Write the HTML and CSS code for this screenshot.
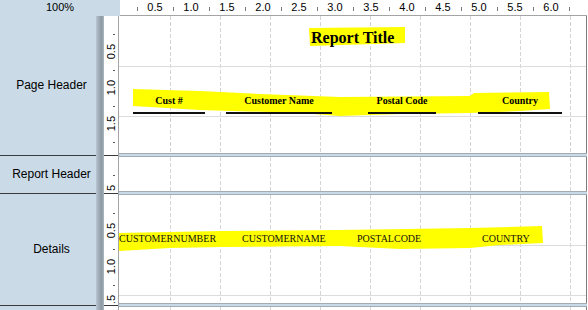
FILE: index.html
```html
<!DOCTYPE html>
<html>
<head>
<meta charset="utf-8">
<link rel="stylesheet" href="styles.css">
</head>
<body>
<div class="designer">
  <div class="topbar">
    <div class="zoom">100%</div>
    <div class="hruler">
      <span class="hcell">0.5</span><span class="hcell">1.0</span><span class="hcell">1.5</span><span class="hcell">2.0</span><span class="hcell">2.5</span><span class="hcell">3.0</span><span class="hcell">3.5</span><span class="hcell">4.0</span><span class="hcell">4.5</span><span class="hcell">5.0</span><span class="hcell">5.5</span><span class="hcell">6.0</span>
    </div>
  </div>

  <div class="section page">
    <div class="label">Page Header</div>
    <div class="strip"></div>
    <div class="vruler">
      <div class="vcell"><span>0.5</span></div><div class="vcell"><span>1.0</span></div><div class="vcell"><span>1.5</span></div>
    </div>
    <div class="canvas">
      <svg class="hl" width="467" height="137" viewBox="0 0 467 137">
        <polygon points="190,12 286,11 286,27 191,30" />
        <polygon points="14,73 81,75 141,78 221,81 351,80 355,77 430,76 431,93 401,95 351,97 281,98 221,100 181,97 81,94 14,90" />
      </svg>
      <div class="title">Report Title</div>
      <div class="hdr h-cust">Cust #</div>
      <div class="hdr h-name">Customer Name</div>
      <div class="hdr h-postal">Postal Code</div>
      <div class="hdr h-country">Country</div>
    </div>
  </div>
  <div class="sep"><div class="sep-label"></div><div class="strip"></div><div class="sep-ruler"></div><div class="band"></div></div>

  <div class="section report">
    <div class="label">Report Header</div>
    <div class="strip"></div>
    <div class="vruler">
      <div class="vcell"><span>0.5</span></div>
    </div>
    <div class="canvas"></div>
  </div>
  <div class="sep"><div class="sep-label"></div><div class="strip"></div><div class="sep-ruler"></div><div class="band"></div></div>

  <div class="section details">
    <div class="label">Details</div>
    <div class="strip"></div>
    <div class="vruler">
      <div class="vcell"><span>0.5</span></div><div class="vcell"><span>1.0</span></div><div class="vcell"><span>1.5</span></div>
    </div>
    <div class="canvas">
      <svg class="hl" width="467" height="108" viewBox="0 0 467 108">
        <polygon points="0,38 101,36 221,35 351,33 423,31 424,48 381,50 351,53 281,54 221,51 101,52 51,53 0,56" />
      </svg>
      <div class="fld f-num">CUSTOMERNUMBER</div>
      <div class="fld f-name">CUSTOMERNAME</div>
      <div class="fld f-postal">POSTALCODE</div>
      <div class="fld f-country">COUNTRY</div>
    </div>
  </div>
  <div class="sep"><div class="sep-label"></div><div class="strip"></div><div class="sep-ruler"></div><div class="band"></div></div>

  <div class="section footer">
    <div class="label"></div>
    <div class="strip"></div>
    <div class="vruler"></div>
    <div class="canvas"></div>
  </div>
</div>
</body>
</html>
```
FILE: styles.css
```css
html, body {
  margin: 0;
  padding: 0;
  background: #fff;
}
body {
  width: 588px;
  height: 310px;
  overflow: hidden;
  font-family: "Liberation Sans", Arial, sans-serif;
  color: #000;
}
.designer {
  display: flex;
  flex-direction: column;
  width: 588px;
}

/* top bar */
.topbar {
  display: flex;
  height: 16px;
}
.zoom {
  width: 120px;
  height: 16px;
  background: #cadbe7;
  font-size: 11px;
  line-height: 15px;
  text-align: center;
}
.hruler {
  width: 467px;
  height: 16px;
  box-sizing: border-box;
  border-bottom: 1px solid #a4a4a4;
  padding-left: 17px;
  display: flex;
  background:
    repeating-linear-gradient(to right, #7a7a7a 0 1px, transparent 1px 36px) 17px 7px / 100% 4px no-repeat,
    #fff;
}
.hcell {
  flex: none;
  width: 36px;
  text-align: center;
  font-size: 11px;
  line-height: 15px;
}

/* sections */
.section {
  display: flex;
}
.page { height: 137px; }
.report { height: 34px; }
.details { height: 108px; }
.footer { height: 3px; }

.label {
  width: 96px;
  box-sizing: border-box;
  padding-left: 7px;
  background: #cadbe7;
  display: flex;
  align-items: center;
  justify-content: center;
  font-size: 12px;
  white-space: nowrap;
}
.strip {
  width: 8px;
  flex: none;
  background: linear-gradient(to right, #b8c6d1 0, #a3b0bb 30%, #8d99a3 65%, #97a3ad 85%, #b0bcc6 100%);
}
.vruler {
  width: 14px;
  flex: none;
  border-right: 1px solid #a4a4a4;
  overflow: hidden;
  display: flex;
  flex-direction: column;
  padding-top: 18px;
  box-sizing: content-box;
  background:
    repeating-linear-gradient(to bottom, #5a5a5a 0 1px, transparent 1px 36px) 9px 18px / 2px 100% no-repeat,
    #fff;
}
.footer .vruler { padding-top: 0; }
.vcell {
  flex: none;
  height: 36px;
  display: flex;
  align-items: center;
  justify-content: center;
}
.vcell span {
  writing-mode: vertical-rl;
  transform: rotate(180deg);
  font-size: 11px;
  line-height: 14px;
  white-space: nowrap;
}

.canvas {
  position: relative;
  width: 467px;
  flex: none;
  border-right: 1px solid #7c7c7c;
  overflow: hidden;
  background-color: #fff;
  background-image:
    repeating-linear-gradient(to bottom, transparent 0 49px, #dcdcdc 49px 50px),
    repeating-linear-gradient(to bottom, transparent 0 4px, #fff 4px 6px),
    repeating-linear-gradient(to right, transparent 0 49px, #d4d4d4 49px 50px);
  background-position: 0 1px, 0 0, 2px 0;
  background-repeat: no-repeat;
}

/* separators */
.sep {
  display: flex;
  height: 4px;
}
.sep-label {
  width: 96px;
  background:
    linear-gradient(#3a3a3a, #3a3a3a) 0 2px / 100% 1px no-repeat,
    #cadbe7;
}
.sep-ruler {
  width: 14px;
  border-right: 1px solid #a4a4a4;
  background:
    linear-gradient(#3a3a3a, #3a3a3a) 0 2px / 100% 1px no-repeat,
    #fff;
}
.band {
  width: 468px;
  box-sizing: border-box;
  border-top: 1px solid #a3abb3;
  border-bottom: 1px solid #a3abb3;
  background: #c9d9e5;
}

/* report items */
.hl {
  position: absolute;
  left: 0;
  top: 0;
}
.hl polygon {
  fill: #ffff00;
}
.title {
  position: absolute;
  left: 192px;
  top: 14px;
  font-family: "Liberation Serif", "Times New Roman", serif;
  font-weight: bold;
  font-size: 16px;
  line-height: 1;
  white-space: nowrap;
}
.hdr {
  position: absolute;
  top: 80px;
  height: 16px;
  border-bottom: 2px solid #111;
  text-align: center;
  font-family: "Liberation Serif", "Times New Roman", serif;
  font-weight: bold;
  font-size: 10px;
  line-height: 1;
  white-space: nowrap;
}
.h-cust { left: 14px; width: 72px; }
.h-name { left: 107px; width: 106px; }
.h-postal { left: 249px; width: 68px; }
.h-country { left: 359px; width: 84px; }

.fld {
  position: absolute;
  top: 39px;
  font-family: "Liberation Serif", "Times New Roman", serif;
  font-size: 10px;
  line-height: 1;
  white-space: nowrap;
  color: #111;
}
.f-num { left: 0; }
.f-name { left: 123px; }
.f-postal { left: 238px; }
.f-country { left: 363px; }
```
